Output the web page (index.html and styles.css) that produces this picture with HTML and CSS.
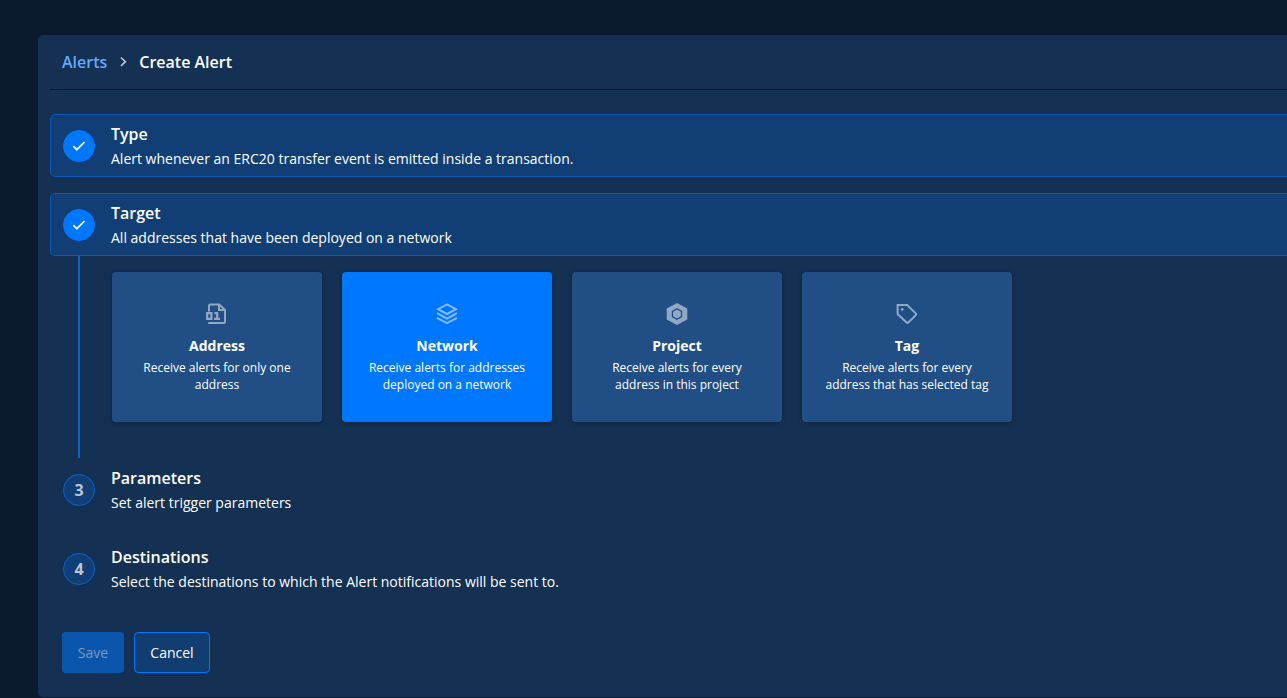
FILE: index.html
```html
<!DOCTYPE html>
<html lang="en">
<head>
<meta charset="utf-8">
<title>Create Alert</title>
<link rel="stylesheet" href="styles.css">
</head>
<body>
<main class="panel">
  <nav class="breadcrumb">
    <a class="crumb-link">Alerts</a>
    <svg class="chevron" viewBox="0 0 8 12"><path d="M1.9 1.5L6.4 5.7L1.9 10"/></svg>
    <span class="crumb-current">Create Alert</span>
  </nav>

  <section class="step done">
    <div class="badge"><svg viewBox="0 0 14 12"><path d="M1.3 6.2L4.8 9.7L12.5 2"/></svg></div>
    <div class="step-text"><h2>Type</h2><p>Alert whenever an ERC20 transfer event is emitted inside a transaction.</p></div>
  </section>

  <section class="step done">
    <div class="badge"><svg viewBox="0 0 14 12"><path d="M1.3 6.2L4.8 9.7L12.5 2"/></svg></div>
    <div class="step-text"><h2>Target</h2><p>All addresses that have been deployed on a network</p></div>
  </section>

  <div class="step-body">
    <article class="card">
      <svg class="icon" viewBox="0 0 22 22"><path class="line" d="M3 8.4V3C3 2.1 3.6 1.5 4.5 1.5H13.2L19 7V18.5C19 19.4 18.4 20 17.5 20H2.2M13 1.8V7H18.8"/><path class="line digit" d="M1.2 10.2H5.4V15.8H1.2ZM8.4 10.2H11.2V15.8M8 15.9H14"/></svg>
      <h3>Address</h3><p>Receive alerts for only one address</p>
    </article>
    <article class="card selected">
      <svg class="icon" viewBox="0 0 22 22"><path class="line" d="M11 1.4L20 6.2L11 11L2 6.2ZM1 10.2L11 15.6L21 10.2M1 14.8L11 20.2L21 14.8"/></svg>
      <h3>Network</h3><p>Receive alerts for addresses deployed on a network</p>
    </article>
    <article class="card">
      <svg class="icon" viewBox="0 0 22 22"><path class="solid" fill-rule="evenodd" d="M11 0L21.3 5.5V16.5L11 22L.7 16.5V5.5ZM11 5L5.8 8V14L11 17L16.2 14V8ZM11 6.5L14.9 8.8V13.2L11 15.5L7.1 13.2V8.8Z"/></svg>
      <h3>Project</h3><p>Receive alerts for every address in this project</p>
    </article>
    <article class="card">
      <svg class="icon" viewBox="0 0 22 22"><path class="line" d="M1.6 2H11.2L19.8 10.4C20.4 11 20.4 11.5 19.8 12.1L12.3 19.5C11.7 20.1 11.2 20.1 10.6 19.5L1.6 11Z"/><circle class="solid" cx="6.2" cy="6.4" r="1.4"/></svg>
      <h3>Tag</h3><p>Receive alerts for every address that has selected tag</p>
    </article>
  </div>

  <section class="step">
    <div class="badge">3</div>
    <div class="step-text"><h2>Parameters</h2><p>Set alert trigger parameters</p></div>
  </section>
  <section class="step">
    <div class="badge">4</div>
    <div class="step-text"><h2>Destinations</h2><p>Select the destinations to which the Alert notifications will be sent to.</p></div>
  </section>

  <footer class="actions">
    <button class="btn save" disabled>Save</button>
    <button class="btn cancel">Cancel</button>
  </footer>
</main>
</body>
</html>
```
FILE: styles.css
```css
* { box-sizing: border-box; }
html { height: 100%; overflow: hidden; }
body {
  margin: 0;
  height: 100%;
  padding: 35px 0 0 38px;
  overflow: hidden;
  background: #0a1a2f;
  color: #fff;
  font: 14px/20px "Open Sans", sans-serif;
}
h2, h3, p { margin: 0; }
svg { display: block; }

.panel {
  width: calc(100% + 40px);
  height: 662px;
  padding: 0 12px;
  border-radius: 5px;
  background: #143153;
}
.breadcrumb {
  display: flex;
  align-items: center;
  height: 55px;
  margin-bottom: 24px;
  padding: 0 12px;
  border-bottom: 1px solid #071426;
  font-size: 16px;
  font-weight: 600;
}
.crumb-link { color: #66a6ff; }
.chevron {
  width: 8px;
  height: 12px;
  margin: 0 12px;
  fill: none;
  stroke: #c0c8d2;
  stroke-width: 1.6;
}

.step {
  display: flex;
  align-items: center;
  gap: 16px;
  height: 63px;
  margin-bottom: 16px;
  padding: 0 12px;
  border: 1px solid transparent;
  border-radius: 5px;
}
.step.done { border-color: #0a58b7; background: #113f75; }
.badge {
  display: flex;
  flex: none;
  align-items: center;
  justify-content: center;
  width: 32px;
  height: 32px;
  border: 1px solid #0862cf;
  border-radius: 50%;
  background: #113f75;
  color: #bac5d3;
  font-size: 16px;
  font-weight: 700;
}
.done .badge { border-color: #0077ff; background: #0077ff; }
.badge svg {
  width: 14px;
  height: 12px;
  fill: none;
  stroke: #fff;
  stroke-width: 1.7;
}
.step-text { padding-top: 1px; }
.step-text h2 { font-size: 16px; line-height: 24px; font-weight: 600; }
.step-text p { padding-top: 1px; line-height: 24px; }

.step-body {
  display: flex;
  gap: 20px;
  height: 202px;
  margin: -16px 0 0 28px;
  padding: 16px 0 0 32px;
  border-left: 2px solid #0a63ce;
}
.card {
  display: flex;
  flex-direction: column;
  align-items: center;
  width: 210px;
  height: 150px;
  padding: 31px 20px 0;
  border-radius: 4px;
  background: #204e85;
  box-shadow: 0 1px 5px rgba(0, 0, 0, .3);
  text-align: center;
}
.card.selected { background: #0077ff; }
.card h3 { margin-top: 11px; font-size: 14px; line-height: 20px; font-weight: 700; }
.card p { margin-top: 3px; font-size: 12px; line-height: 17px; }
.icon { width: 22px; height: 22px; }
.line { fill: none; stroke: #91a8c4; stroke-width: 2; }
.solid { fill: #91a8c4; }
.selected .line { stroke: #82bcff; }
.line.digit { stroke-width: 2.2; }

.actions { display: flex; gap: 10px; margin-top: 32px; padding-left: 12px; }
.btn {
  height: 41px;
  padding: 0;
  border-radius: 4px;
  font: 14px/20px "Open Sans", sans-serif;
}
.save { width: 62px; border: 0; background: #0b56ad; color: #8097b4; }
.cancel { width: 76px; border: 1px solid #0077ff; background: #113d70; color: #fff; }
```
